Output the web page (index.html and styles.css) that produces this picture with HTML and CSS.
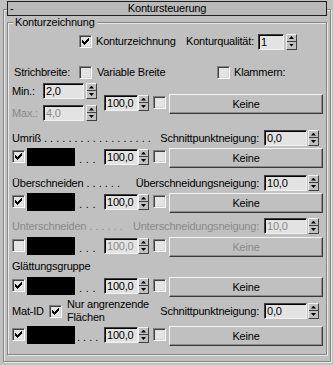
FILE: index.html
```html
<!DOCTYPE html>
<html lang="de">
<head>
<meta charset="utf-8">
<title>Kontursteuerung</title>
<link rel="stylesheet" href="styles.css">
</head>
<body>
<div class="rollout">
  <div class="title"><span class="minus">-</span><span>Kontursteuerung</span><span></span></div>
  <div class="group">
    <div class="legend">Konturzeichnung</div>

    <div class="row-a">
      <span class="cb"><svg width="7" height="7" viewBox="0 0 7 7"><path d="M0 2h1v1h1v1h1v-1h1v-1h1v-1h1v-1h1v3h-1v1h-1v1h-1v1h-1v1h-1v-1h-1v-1h-1z"/></svg></span>
      <span class="cbl">Konturzeichnung</span>
      <span class="push">Konturqualität:</span>
      <span class="num q">1</span>
      <span class="spin"><i></i><i></i></span>
    </div>

    <div class="row-b">
      <span class="sb">Strichbreite:</span>
      <span class="cb"></span>
      <span class="cbl vb">Variable Breite</span>
      <span class="cb"></span>
      <span class="cbl">Klammern:</span>
    </div>

    <div class="minmax">
      <div class="mm-col">
        <div class="mm-row"><span class="mm-lbl">Min.:</span><span class="num mm">2,0</span><span class="spin"><i></i><i></i></span></div>
        <div class="mm-row"><span class="mm-lbl off">Max.:</span><span class="num mm off">4,0</span><span class="spin"><i></i><i></i></span></div>
      </div>
      <div class="ctrl cr">
        <span class="num pct">100,0</span><span class="spin"><i></i><i></i></span><span class="cb m"></span><span class="btn">Keine</span>
      </div>
    </div>

    <div class="lrow first">
      <span>Umriß</span><span class="dots">. . . . . . . . . . . . . . . . . .</span><span class="push">Schnittpunktneigung:</span><span class="num nw">0,0</span><span class="spin"><i></i><i></i></span>
    </div>
    <div class="ctrl">
      <span class="cb"><svg width="7" height="7" viewBox="0 0 7 7"><path d="M0 2h1v1h1v1h1v-1h1v-1h1v-1h1v-1h1v3h-1v1h-1v1h-1v1h-1v1h-1v-1h-1v-1h-1z"/></svg></span><span class="sw"></span><span class="dd">. . .</span><span class="num pct">100,0</span><span class="spin"><i></i><i></i></span><span class="cb m"></span><span class="btn">Keine</span>
    </div>

    <div class="lrow">
      <span>Überschneiden</span><span class="dots">. . . . . .</span><span class="push">Überschneidungsneigung:</span><span class="num nw">10,0</span><span class="spin"><i></i><i></i></span>
    </div>
    <div class="ctrl">
      <span class="cb"><svg width="7" height="7" viewBox="0 0 7 7"><path d="M0 2h1v1h1v1h1v-1h1v-1h1v-1h1v-1h1v3h-1v1h-1v1h-1v1h-1v1h-1v-1h-1v-1h-1z"/></svg></span><span class="sw"></span><span class="dd">. . .</span><span class="num pct">100,0</span><span class="spin"><i></i><i></i></span><span class="cb m"></span><span class="btn">Keine</span>
    </div>

    <div class="lrow dis">
      <span>Unterschneiden</span><span class="dots">. . . . . .</span><span class="push">Unterschneidungsneigung:</span><span class="num nw">10,0</span><span class="spin"><i></i><i></i></span>
    </div>
    <div class="ctrl dis">
      <span class="cb"></span><span class="sw"></span><span class="dd">. . .</span><span class="num pct off">100,0</span><span class="spin"><i></i><i></i></span><span class="cb m"></span><span class="btn off">Keine</span>
    </div>

    <div class="glabel">Glättungsgruppe</div>
    <div class="ctrl">
      <span class="cb"><svg width="7" height="7" viewBox="0 0 7 7"><path d="M0 2h1v1h1v1h1v-1h1v-1h1v-1h1v-1h1v3h-1v1h-1v1h-1v1h-1v1h-1v-1h-1v-1h-1z"/></svg></span><span class="sw"></span><span class="dd">. . .</span><span class="num pct">100,0</span><span class="spin"><i></i><i></i></span><span class="cb m"></span><span class="btn">Keine</span>
    </div>

    <div class="matrow">
      <span class="matlbl">Mat-ID</span>
      <span class="cb"><svg width="7" height="7" viewBox="0 0 7 7"><path d="M0 2h1v1h1v1h1v-1h1v-1h1v-1h1v-1h1v3h-1v1h-1v1h-1v1h-1v1h-1v-1h-1v-1h-1z"/></svg></span>
      <span class="matcb">Nur angrenzende<br>Flächen</span>
      <span class="push">Schnittpunktneigung:</span><span class="num nw">0,0</span><span class="spin"><i></i><i></i></span>
    </div>
    <div class="ctrl">
      <span class="cb"><svg width="7" height="7" viewBox="0 0 7 7"><path d="M0 2h1v1h1v1h1v-1h1v-1h1v-1h1v-1h1v3h-1v1h-1v1h-1v1h-1v1h-1v-1h-1v-1h-1z"/></svg></span><span class="sw"></span><span class="dd four">. . . .</span><span class="num pct">100,0</span><span class="spin"><i></i><i></i></span><span class="cb m"></span><span class="btn">Keine</span>
    </div>
  </div>
</div>
</body>
</html>
```

FILE: styles.css
```css
* { box-sizing: border-box; }
html, body { margin: 0; padding: 0; }
body {
  width: 333px; height: 365px; overflow: hidden;
  background: #c0c0c0; color: #000;
  font-family: "Liberation Sans", Arial, sans-serif;
  font-size: 11px; line-height: 13px; letter-spacing: -0.2px;
}

.rollout {
  margin: 9px 0 0 3px; width: 328px; height: 353px;
  border: 1px solid #868686;
  box-shadow: inset 1px 1px 0 #e8e8e8, 1px 1px 0 #e8e8e8;
}
.title {
  margin: -9px 0 0 3px; width: 320px; height: 15px;
  border: 1px solid #202020; background: #b9b9b9;
  display: grid; grid-template-columns: 1fr auto 1fr; align-items: center;
}
.minus { padding-left: 2px; }

.group {
  margin: 6px 0 0 3px; width: 320px;
  padding: 0 3px 8px 4px;
  border: 1px solid #868686;
  box-shadow: inset 1px 1px 0 #e8e8e8, 1px 1px 0 #e8e8e8;
}
.legend { width: max-content; margin: -7px 0 0 1px; padding: 0 2px; background: #c0c0c0; }

/* common controls */
.cb {
  flex: none; width: 13px; height: 13px;
  display: flex; align-items: center; justify-content: center;
  background: #e4e4e4;
  border: 1px solid; border-color: #808080 #fff #fff #808080;
  box-shadow: inset 1px 1px 0 #404040, inset -1px -1px 0 #d4d4d4;
}
.cb svg { display: block; fill: #000; }
.cbl { margin-left: 4px; white-space: nowrap; }
.push { margin-left: auto; white-space: nowrap; }

.num {
  flex: none; height: 16px;
  border: 1px solid; border-color: #404040 #f2f2f2 #f2f2f2 #404040;
  box-shadow: inset 1px 1px 0 #000;
  background: #e3e3e3;
  padding: 0 0 0 2px; line-height: 14px;
  white-space: nowrap; overflow: hidden;
}
.spin {
  flex: none; width: 11px; height: 16px;
  display: flex; flex-direction: column;
  border: 1px solid; border-color: #f2f2f2 #404040 #404040 #f2f2f2;
  background: #c0c0c0;
}
.spin i { flex: none; height: 7px; display: flex; align-items: center; justify-content: center; }
.spin i:first-child { border-bottom: 1px solid #404040; }
.spin i::after { content: ""; width: 5px; height: 3px; background: #000; clip-path: polygon(50% 0, 100% 100%, 0 100%); }
.spin i:last-child::after { clip-path: polygon(0 0, 100% 0, 50% 100%); }

.btn {
  flex: 1; height: 20px; margin-left: 3px;
  border: 1px solid; border-color: #f4f4f4 #3a3a3a #3a3a3a #f4f4f4;
  box-shadow: inset -1px -1px 0 #8c8c8c;
  display: flex; align-items: center; justify-content: center;
}
.off, .dis { color: #8a8a8a; }
.ctrl.dis { color: #000; }
.ctrl.dis .off { color: #8a8a8a; }

/* row: Konturzeichnung */
.row-a { display: flex; align-items: center; height: 17px; margin-top: 4px; padding-right: 26px; }
.row-a .cb { margin-left: 67px; }
.q { width: 26px; margin-left: 4px; }
.row-a .spin { margin-left: 2px; }

/* row: Strichbreite */
.row-b { display: flex; align-items: center; height: 17px; margin-top: 14px; }
.sb { margin-left: 2px; width: 65px; }
.vb { width: 120px; margin-left: 5px; }

/* Min / Max */
.minmax { display: flex; margin-top: 2px; }
.mm-col { flex: none; width: 85px; display: flex; flex-direction: column; gap: 6px; }
.mm-row { display: flex; align-items: center; height: 16px; }
.mm-lbl { width: 31px; }
.mm { width: 41px; }
.mm-row .spin { margin-left: 2px; }
.ctrl.cr { flex: 1; margin: 11px 0 0 7px; }

/* label rows */
.lrow { display: flex; align-items: center; height: 16px; margin-top: 7px; padding-right: 4px; white-space: nowrap; }
.lrow.first { margin-top: 9px; }
.lrow.dis { margin-top: 5px; }
.dots { padding-left: 3px; letter-spacing: 0; }
.nw { width: 43px; margin-left: 5px; }
.lrow .spin, .matrow .spin { margin-left: 1px; }

/* control rows */
.ctrl { display: flex; align-items: flex-start; height: 20px; margin-top: 2px; }
.ctrl.dis { margin-top: 3px; }
.ctrl .cb { margin-top: 2px; }
.ctrl .cb.m { margin-left: 4px; }
.sw { flex: none; width: 48px; height: 18px; margin-left: 2px; background: #000; }
.dd { flex: none; width: 29px; padding: 5px 0 0 4px; white-space: nowrap; letter-spacing: 0.3px; }
.dd.four { padding-left: 2px; letter-spacing: 0; }
.pct { width: 34px; margin-top: 1px; }
.ctrl .spin { margin-top: 1px; }

.glabel { height: 13px; margin-top: 3px; }
.glabel + .ctrl { margin-top: 4px; }

/* Mat-ID */
.matrow { display: flex; align-items: center; height: 26px; margin-top: 1px; padding-right: 4px; }
.matlbl { flex: none; width: 37px; }
.matcb { margin-left: 5px; }
```
